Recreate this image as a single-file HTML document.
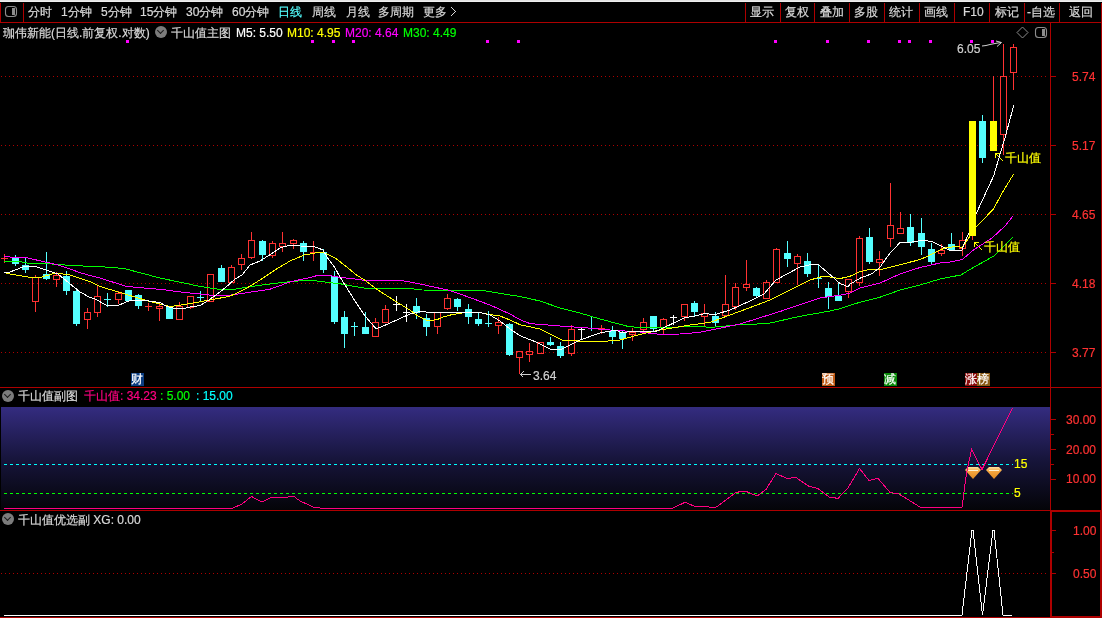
<!DOCTYPE html>
<html><head><meta charset="utf-8"><style>
html,body{margin:0;padding:0;background:#000;width:1102px;height:618px;overflow:hidden;}
body{position:relative;font-family:"Liberation Sans",sans-serif;}
svg{position:absolute;left:0;top:0;}
.t{position:absolute;font-size:12px;line-height:14px;white-space:nowrap;color:#d8d8d8;will-change:transform;-webkit-text-stroke:0.2px currentColor;}
.ax{position:absolute;font-size:12px;line-height:12px;color:#ff3232;white-space:nowrap;will-change:transform;-webkit-text-stroke:0.2px currentColor;}
.circ{position:absolute;width:12px;height:12px;border-radius:6px;background:#7c7c7c;}
.circ:after{content:"";position:absolute;left:3px;top:2px;width:4px;height:4px;border-right:1.5px solid #1a1a1a;border-bottom:1.5px solid #1a1a1a;transform:rotate(45deg);}
</style></head><body>
<svg width="1102" height="618" viewBox="0 0 1102 618" shape-rendering="crispEdges">
<rect x="0" y="0" width="1102" height="618" fill="#000"/>
<rect x="0" y="0" width="1102" height="1" fill="#e3e3e3"/>
<rect x="0" y="1" width="1102" height="1" fill="#efefef"/>
<rect x="0" y="3" width="1" height="19" fill="#ae0000"/>
<rect x="23" y="3" width="1" height="19" fill="#ae0000"/>
<rect x="745" y="3" width="1" height="19" fill="#ae0000"/>
<rect x="780" y="3" width="1" height="19" fill="#ae0000"/>
<rect x="814" y="3" width="1" height="19" fill="#ae0000"/>
<rect x="849" y="3" width="1" height="19" fill="#ae0000"/>
<rect x="884" y="3" width="1" height="19" fill="#ae0000"/>
<rect x="919" y="3" width="1" height="19" fill="#ae0000"/>
<rect x="954" y="3" width="1" height="19" fill="#ae0000"/>
<rect x="989" y="3" width="1" height="19" fill="#ae0000"/>
<rect x="1024" y="3" width="1" height="19" fill="#ae0000"/>
<rect x="1059" y="3" width="1" height="19" fill="#ae0000"/>
<rect x="1101" y="3" width="1" height="19" fill="#ae0000"/>
<rect x="0" y="22" width="1102" height="1" fill="#ae0000"/>
<rect x="1050" y="23" width="1" height="595" fill="#ae0000"/>
<rect x="1101" y="23" width="1" height="595" fill="#ae0000"/>
<rect x="0" y="387" width="1102" height="1" fill="#ae0000"/>
<rect x="0" y="510" width="1102" height="1" fill="#ae0000"/>
<rect x="0" y="617" width="1102" height="1" fill="#ae0000"/>
<rect x="1051" y="511" width="1" height="107" fill="#ae0000"/>
<rect x="1050" y="511" width="52" height="1" fill="#ae0000"/>
<rect x="1100" y="511" width="1" height="107" fill="#ae0000"/>
<rect x="1050" y="616" width="52" height="1" fill="#ae0000"/>
<line x1="1" y1="76.5" x2="1048" y2="76.5" stroke="#ae0000" stroke-width="1" stroke-dasharray="1 3"/>
<rect x="1051" y="76" width="5" height="1" fill="#ae0000"/>
<line x1="1" y1="145.5" x2="1048" y2="145.5" stroke="#ae0000" stroke-width="1" stroke-dasharray="1 3"/>
<rect x="1051" y="145" width="5" height="1" fill="#ae0000"/>
<line x1="1" y1="214.5" x2="1048" y2="214.5" stroke="#ae0000" stroke-width="1" stroke-dasharray="1 3"/>
<rect x="1051" y="214" width="5" height="1" fill="#ae0000"/>
<line x1="1" y1="283.5" x2="1048" y2="283.5" stroke="#ae0000" stroke-width="1" stroke-dasharray="1 3"/>
<rect x="1051" y="283" width="5" height="1" fill="#ae0000"/>
<line x1="1" y1="352.5" x2="1048" y2="352.5" stroke="#ae0000" stroke-width="1" stroke-dasharray="1 3"/>
<rect x="1051" y="352" width="5" height="1" fill="#ae0000"/>
<line x1="1" y1="573.5" x2="1048" y2="573.5" stroke="#ae0000" stroke-width="1" stroke-dasharray="1 3"/>
<rect x="1052" y="530" width="4" height="1" fill="#ae0000"/>
<rect x="1052" y="552" width="2" height="1" fill="#ae0000"/>
<rect x="1052" y="573" width="4" height="1" fill="#ae0000"/>
<defs><linearGradient id="g1" x1="0" y1="0" x2="0" y2="1"><stop offset="0" stop-color="#342c80"/><stop offset="0.5" stop-color="#17153c"/><stop offset="1" stop-color="#040408"/></linearGradient></defs>
<rect x="1" y="407" width="1049" height="103" fill="url(#g1)"/>
<line x1="4" y1="464.5" x2="1013" y2="464.5" stroke="#00ffff" stroke-width="1" stroke-dasharray="3 3"/>
<line x1="4" y1="493.5" x2="1013" y2="493.5" stroke="#00ff00" stroke-width="1" stroke-dasharray="3 3"/>
<rect x="1051" y="419" width="5" height="1" fill="#ae0000"/>
<rect x="1051" y="434" width="3" height="1" fill="#ae0000"/>
<rect x="1051" y="449" width="5" height="1" fill="#ae0000"/>
<rect x="1051" y="464" width="3" height="1" fill="#ae0000"/>
<rect x="1051" y="479" width="5" height="1" fill="#ae0000"/>
<rect x="126" y="40" width="3" height="3" fill="#ff00ff"/>
<rect x="311" y="40" width="3" height="3" fill="#ff00ff"/>
<rect x="332" y="40" width="3" height="3" fill="#ff00ff"/>
<rect x="352" y="40" width="3" height="3" fill="#ff00ff"/>
<rect x="486" y="40" width="3" height="3" fill="#ff00ff"/>
<rect x="517" y="40" width="3" height="3" fill="#ff00ff"/>
<rect x="774" y="40" width="3" height="3" fill="#ff00ff"/>
<rect x="826" y="40" width="3" height="3" fill="#ff00ff"/>
<rect x="867" y="40" width="3" height="3" fill="#ff00ff"/>
<rect x="898" y="40" width="3" height="3" fill="#ff00ff"/>
<rect x="908" y="40" width="3" height="3" fill="#ff00ff"/>
<rect x="929" y="40" width="3" height="3" fill="#ff00ff"/>
<rect x="970" y="40" width="3" height="3" fill="#ff00ff"/>
<rect x="991" y="40" width="3" height="3" fill="#ff00ff"/>
<rect x="5.5" y="6.5" width="11" height="10" rx="3" fill="none" stroke="#8c8c8c" stroke-width="1.1" shape-rendering="auto"/>
<rect x="12" y="8" width="3" height="7" fill="#8c8c8c"/>
<rect x="1035.5" y="27.5" width="11" height="10" rx="3" fill="none" stroke="#8c8c8c" stroke-width="1.1" shape-rendering="auto"/>
<rect x="1042" y="29" width="3" height="7" fill="#8c8c8c"/>
<path d="M1022.5 27 L1028 32.5 L1022.5 38 L1017 32.5 Z" fill="none" stroke="#8c8c8c" stroke-width="1" shape-rendering="auto"/>
<path d="M982 46 L986 45.5 L990 44.5 L995 43.5 L1001 42.5 M996 41 L1001.5 42.5 L997 46.5" fill="none" stroke="#d0d0d0" stroke-width="1" shape-rendering="auto"/>
<path d="M520 374.5 L531 374.5 M523.5 371.5 L520.5 374.5 L523.5 377.5" fill="none" stroke="#d0d0d0" stroke-width="1"/>
<path d="M974.5 242.5 L982 250 M974.5 242.5 L974.5 246.5 M974.5 242.5 L978.5 242.5" fill="none" stroke="#ffff00" stroke-width="1"/>
<path d="M995.5 153.5 L1003 161 M995.5 153.5 L995.5 157.5 M995.5 153.5 L999.5 153.5" fill="none" stroke="#ffff00" stroke-width="1"/>
<defs><linearGradient id="gem" x1="0" y1="0" x2="0" y2="1"><stop offset="0" stop-color="#ffe2a0"/><stop offset="0.35" stop-color="#f5a640"/><stop offset="1" stop-color="#e08a20"/></linearGradient></defs>
<path d="M968 467 L978 467 L981 470 L973 479 L965 470 Z" fill="url(#gem)" shape-rendering="auto"/>
<path d="M968 470 L978 470" stroke="#fff2d0" stroke-width="1" fill="none"/>
<path d="M989 467 L999 467 L1002 470 L994 479 L986 470 Z" fill="url(#gem)" shape-rendering="auto"/>
<path d="M989 470 L999 470" stroke="#fff2d0" stroke-width="1" fill="none"/>
<rect x="131" y="373" width="13" height="13" fill="#0a3c80"/>
<rect x="822" y="373" width="13" height="13" fill="#c05a14"/>
<rect x="884" y="373" width="13" height="13" fill="#0a8a0a"/>
<rect x="965" y="373" width="13" height="13" fill="#8a0a0a"/>
<rect x="977" y="373" width="13" height="13" fill="#8a5a14"/>
<rect x="451" y="7" width="1" height="1" fill="#d8d8d8"/>
<rect x="452" y="8" width="1" height="1" fill="#d8d8d8"/>
<rect x="453" y="9" width="1" height="1" fill="#d8d8d8"/>
<rect x="454" y="10" width="1" height="1" fill="#d8d8d8"/>
<rect x="455" y="11" width="1" height="1" fill="#d8d8d8"/>
<rect x="454" y="12" width="1" height="1" fill="#d8d8d8"/>
<rect x="453" y="13" width="1" height="1" fill="#d8d8d8"/>
<rect x="452" y="14" width="1" height="1" fill="#d8d8d8"/>
<rect x="451" y="15" width="1" height="1" fill="#d8d8d8"/>
<g shape-rendering="crispEdges">
<rect x="4" y="254" width="1" height="9" fill="#ff3232"/>
<rect x="1" y="258" width="7" height="1" fill="#ff3232"/>
<rect x="15" y="255" width="1" height="11" fill="#54ffff"/>
<rect x="12" y="258" width="7" height="6" fill="#54ffff"/>
<rect x="25" y="258" width="1" height="15" fill="#54ffff"/>
<rect x="22" y="265" width="7" height="5" fill="#54ffff"/>
<rect x="35" y="275" width="1" height="2" fill="#ff3232"/>
<rect x="35" y="302" width="1" height="10" fill="#ff3232"/>
<rect x="32.5" y="277.5" width="6" height="24" fill="none" stroke="#ff3232" stroke-width="1"/>
<rect x="46" y="252" width="1" height="28" fill="#54ffff"/>
<rect x="43" y="274" width="7" height="5" fill="#54ffff"/>
<rect x="56" y="272" width="1" height="3" fill="#ff3232"/>
<rect x="56" y="280" width="1" height="7" fill="#ff3232"/>
<rect x="53.5" y="275.5" width="6" height="4" fill="none" stroke="#ff3232" stroke-width="1"/>
<rect x="66" y="271" width="1" height="24" fill="#54ffff"/>
<rect x="63" y="276" width="7" height="15" fill="#54ffff"/>
<rect x="76" y="288" width="1" height="38" fill="#54ffff"/>
<rect x="73" y="291" width="7" height="33" fill="#54ffff"/>
<rect x="87" y="308" width="1" height="4" fill="#ff3232"/>
<rect x="87" y="320" width="1" height="9" fill="#ff3232"/>
<rect x="84.5" y="312.5" width="6" height="7" fill="none" stroke="#ff3232" stroke-width="1"/>
<rect x="97" y="286" width="1" height="10" fill="#ff3232"/>
<rect x="97" y="313" width="1" height="4" fill="#ff3232"/>
<rect x="94.5" y="296.5" width="6" height="16" fill="none" stroke="#ff3232" stroke-width="1"/>
<rect x="107" y="293" width="1" height="14" fill="#54ffff"/>
<rect x="104" y="299" width="7" height="1" fill="#54ffff"/>
<rect x="118" y="291" width="1" height="2" fill="#ff3232"/>
<rect x="118" y="300" width="1" height="4" fill="#ff3232"/>
<rect x="115.5" y="293.5" width="6" height="6" fill="none" stroke="#ff3232" stroke-width="1"/>
<rect x="128" y="290" width="1" height="11" fill="#54ffff"/>
<rect x="125" y="290" width="7" height="11" fill="#54ffff"/>
<rect x="138" y="294" width="1" height="15" fill="#54ffff"/>
<rect x="135" y="295" width="7" height="11" fill="#54ffff"/>
<rect x="148" y="303" width="1" height="8" fill="#ff3232"/>
<rect x="145" y="306" width="7" height="1" fill="#ff3232"/>
<rect x="159" y="304" width="1" height="2" fill="#ff3232"/>
<rect x="159" y="309" width="1" height="12" fill="#ff3232"/>
<rect x="156.5" y="306.5" width="6" height="2" fill="none" stroke="#ff3232" stroke-width="1"/>
<rect x="169" y="307" width="1" height="12" fill="#54ffff"/>
<rect x="166" y="307" width="7" height="12" fill="#54ffff"/>
<rect x="179" y="302" width="1" height="4" fill="#ff3232"/>
<rect x="176.5" y="306.5" width="6" height="13" fill="none" stroke="#ff3232" stroke-width="1"/>
<rect x="190" y="308" width="1" height="1" fill="#ff3232"/>
<rect x="187.5" y="296.5" width="6" height="11" fill="none" stroke="#ff3232" stroke-width="1"/>
<rect x="200" y="291" width="1" height="10" fill="#54ffff"/>
<rect x="197" y="297" width="7" height="1" fill="#54ffff"/>
<rect x="207.5" y="274.5" width="6" height="27" fill="none" stroke="#ff3232" stroke-width="1"/>
<rect x="221" y="265" width="1" height="17" fill="#54ffff"/>
<rect x="218" y="268" width="7" height="14" fill="#54ffff"/>
<rect x="231" y="265" width="1" height="2" fill="#ff3232"/>
<rect x="228.5" y="267.5" width="6" height="15" fill="none" stroke="#ff3232" stroke-width="1"/>
<rect x="241" y="254" width="1" height="4" fill="#ff3232"/>
<rect x="241" y="265" width="1" height="5" fill="#ff3232"/>
<rect x="238.5" y="258.5" width="6" height="6" fill="none" stroke="#ff3232" stroke-width="1"/>
<rect x="251" y="232" width="1" height="8" fill="#ff3232"/>
<rect x="251" y="258" width="1" height="1" fill="#ff3232"/>
<rect x="248.5" y="240.5" width="6" height="17" fill="none" stroke="#ff3232" stroke-width="1"/>
<rect x="262" y="240" width="1" height="21" fill="#54ffff"/>
<rect x="259" y="241" width="7" height="14" fill="#54ffff"/>
<rect x="272" y="241" width="1" height="2" fill="#ff3232"/>
<rect x="272" y="256" width="1" height="2" fill="#ff3232"/>
<rect x="269.5" y="243.5" width="6" height="12" fill="none" stroke="#ff3232" stroke-width="1"/>
<rect x="282" y="232" width="1" height="11" fill="#ff3232"/>
<rect x="282" y="247" width="1" height="5" fill="#ff3232"/>
<rect x="279.5" y="243.5" width="6" height="3" fill="none" stroke="#ff3232" stroke-width="1"/>
<rect x="293" y="239" width="1" height="1" fill="#ff3232"/>
<rect x="293" y="244" width="1" height="5" fill="#ff3232"/>
<rect x="290.5" y="240.5" width="6" height="3" fill="none" stroke="#ff3232" stroke-width="1"/>
<rect x="303" y="241" width="1" height="20" fill="#54ffff"/>
<rect x="300" y="243" width="7" height="9" fill="#54ffff"/>
<rect x="313" y="241" width="1" height="20" fill="#ff3232"/>
<rect x="310" y="252" width="7" height="1" fill="#ff3232"/>
<rect x="323" y="249" width="1" height="24" fill="#54ffff"/>
<rect x="320" y="252" width="7" height="18" fill="#54ffff"/>
<rect x="334" y="271" width="1" height="53" fill="#54ffff"/>
<rect x="331" y="276" width="7" height="46" fill="#54ffff"/>
<rect x="344" y="311" width="1" height="37" fill="#54ffff"/>
<rect x="341" y="317" width="7" height="17" fill="#54ffff"/>
<rect x="354" y="322" width="1" height="14" fill="#54ffff"/>
<rect x="351" y="326" width="7" height="1" fill="#54ffff"/>
<rect x="365" y="312" width="1" height="22" fill="#54ffff"/>
<rect x="362" y="327" width="7" height="7" fill="#54ffff"/>
<rect x="375" y="318" width="1" height="4" fill="#ff3232"/>
<rect x="372.5" y="322.5" width="6" height="14" fill="none" stroke="#ff3232" stroke-width="1"/>
<rect x="385" y="305" width="1" height="4" fill="#ff3232"/>
<rect x="382.5" y="309.5" width="6" height="13" fill="none" stroke="#ff3232" stroke-width="1"/>
<rect x="396" y="296" width="1" height="15" fill="#ffffff"/>
<rect x="393" y="304" width="7" height="1" fill="#ffffff"/>
<rect x="406" y="304" width="1" height="18" fill="#ffffff"/>
<rect x="403" y="312" width="7" height="1" fill="#ffffff"/>
<rect x="416" y="298" width="1" height="21" fill="#54ffff"/>
<rect x="413" y="306" width="7" height="7" fill="#54ffff"/>
<rect x="426" y="314" width="1" height="22" fill="#54ffff"/>
<rect x="423" y="318" width="7" height="9" fill="#54ffff"/>
<rect x="437" y="327" width="1" height="7" fill="#ff3232"/>
<rect x="434.5" y="312.5" width="6" height="14" fill="none" stroke="#ff3232" stroke-width="1"/>
<rect x="447" y="294" width="1" height="4" fill="#ff3232"/>
<rect x="447" y="309" width="1" height="1" fill="#ff3232"/>
<rect x="444.5" y="298.5" width="6" height="10" fill="none" stroke="#ff3232" stroke-width="1"/>
<rect x="457" y="298" width="1" height="13" fill="#54ffff"/>
<rect x="454" y="299" width="7" height="8" fill="#54ffff"/>
<rect x="468" y="304" width="1" height="20" fill="#54ffff"/>
<rect x="465" y="309" width="7" height="8" fill="#54ffff"/>
<rect x="478" y="312" width="1" height="14" fill="#54ffff"/>
<rect x="475" y="319" width="7" height="5" fill="#54ffff"/>
<rect x="488" y="311" width="1" height="16" fill="#54ffff"/>
<rect x="485" y="323" width="7" height="1" fill="#54ffff"/>
<rect x="498" y="317" width="1" height="5" fill="#ff3232"/>
<rect x="498" y="326" width="1" height="8" fill="#ff3232"/>
<rect x="495.5" y="322.5" width="6" height="3" fill="none" stroke="#ff3232" stroke-width="1"/>
<rect x="509" y="323" width="1" height="33" fill="#54ffff"/>
<rect x="506" y="324" width="7" height="31" fill="#54ffff"/>
<rect x="519" y="358" width="1" height="16" fill="#ff3232"/>
<rect x="516.5" y="351.5" width="6" height="6" fill="none" stroke="#ff3232" stroke-width="1"/>
<rect x="529" y="343" width="1" height="8" fill="#ff3232"/>
<rect x="529" y="355" width="1" height="7" fill="#ff3232"/>
<rect x="526.5" y="351.5" width="6" height="3" fill="none" stroke="#ff3232" stroke-width="1"/>
<rect x="537.5" y="342.5" width="6" height="11" fill="none" stroke="#ff3232" stroke-width="1"/>
<rect x="550" y="337" width="1" height="9" fill="#54ffff"/>
<rect x="547" y="342" width="7" height="3" fill="#54ffff"/>
<rect x="560" y="342" width="1" height="16" fill="#54ffff"/>
<rect x="557" y="346" width="7" height="10" fill="#54ffff"/>
<rect x="571" y="325" width="1" height="4" fill="#ff3232"/>
<rect x="571" y="354" width="1" height="2" fill="#ff3232"/>
<rect x="568.5" y="329.5" width="6" height="24" fill="none" stroke="#ff3232" stroke-width="1"/>
<rect x="581" y="327" width="1" height="12" fill="#ffffff"/>
<rect x="578" y="329" width="7" height="1" fill="#ffffff"/>
<rect x="591" y="317" width="1" height="14" fill="#54ffff"/>
<rect x="588" y="328" width="7" height="1" fill="#54ffff"/>
<rect x="601" y="325" width="1" height="3" fill="#ff3232"/>
<rect x="601" y="329" width="1" height="5" fill="#ff3232"/>
<rect x="598.5" y="328.5" width="6" height="1" fill="none" stroke="#ff3232" stroke-width="1"/>
<rect x="612" y="326" width="1" height="18" fill="#54ffff"/>
<rect x="609" y="331" width="7" height="6" fill="#54ffff"/>
<rect x="622" y="331" width="1" height="18" fill="#54ffff"/>
<rect x="619" y="332" width="7" height="7" fill="#54ffff"/>
<rect x="632" y="328" width="1" height="4" fill="#ff3232"/>
<rect x="632" y="335" width="1" height="6" fill="#ff3232"/>
<rect x="629.5" y="332.5" width="6" height="2" fill="none" stroke="#ff3232" stroke-width="1"/>
<rect x="643" y="318" width="1" height="4" fill="#ff3232"/>
<rect x="643" y="330" width="1" height="1" fill="#ff3232"/>
<rect x="640.5" y="322.5" width="6" height="7" fill="none" stroke="#ff3232" stroke-width="1"/>
<rect x="653" y="316" width="1" height="15" fill="#54ffff"/>
<rect x="650" y="316" width="7" height="13" fill="#54ffff"/>
<rect x="663" y="318" width="1" height="1" fill="#ff3232"/>
<rect x="663" y="328" width="1" height="6" fill="#ff3232"/>
<rect x="660.5" y="319.5" width="6" height="8" fill="none" stroke="#ff3232" stroke-width="1"/>
<rect x="673" y="315" width="1" height="10" fill="#ffffff"/>
<rect x="670" y="317" width="7" height="1" fill="#ffffff"/>
<rect x="684" y="317" width="1" height="4" fill="#ff3232"/>
<rect x="681.5" y="304.5" width="6" height="12" fill="none" stroke="#ff3232" stroke-width="1"/>
<rect x="694" y="301" width="1" height="15" fill="#54ffff"/>
<rect x="691" y="303" width="7" height="9" fill="#54ffff"/>
<rect x="704" y="304" width="1" height="9" fill="#ff3232"/>
<rect x="704" y="317" width="1" height="9" fill="#ff3232"/>
<rect x="701.5" y="313.5" width="6" height="3" fill="none" stroke="#ff3232" stroke-width="1"/>
<rect x="715" y="312" width="1" height="14" fill="#54ffff"/>
<rect x="712" y="316" width="7" height="7" fill="#54ffff"/>
<rect x="725" y="275" width="1" height="29" fill="#ff3232"/>
<rect x="725" y="316" width="1" height="1" fill="#ff3232"/>
<rect x="722.5" y="304.5" width="6" height="11" fill="none" stroke="#ff3232" stroke-width="1"/>
<rect x="735" y="283" width="1" height="4" fill="#ff3232"/>
<rect x="735" y="307" width="1" height="3" fill="#ff3232"/>
<rect x="732.5" y="287.5" width="6" height="19" fill="none" stroke="#ff3232" stroke-width="1"/>
<rect x="746" y="260" width="1" height="24" fill="#ff3232"/>
<rect x="746" y="288" width="1" height="3" fill="#ff3232"/>
<rect x="743.5" y="284.5" width="6" height="3" fill="none" stroke="#ff3232" stroke-width="1"/>
<rect x="756" y="287" width="1" height="11" fill="#54ffff"/>
<rect x="753" y="288" width="7" height="8" fill="#54ffff"/>
<rect x="766" y="280" width="1" height="2" fill="#ff3232"/>
<rect x="763.5" y="282.5" width="6" height="16" fill="none" stroke="#ff3232" stroke-width="1"/>
<rect x="776" y="248" width="1" height="1" fill="#ff3232"/>
<rect x="773.5" y="249.5" width="6" height="33" fill="none" stroke="#ff3232" stroke-width="1"/>
<rect x="787" y="241" width="1" height="26" fill="#54ffff"/>
<rect x="784" y="253" width="7" height="6" fill="#54ffff"/>
<rect x="797" y="254" width="1" height="2" fill="#ff3232"/>
<rect x="797" y="264" width="1" height="21" fill="#ff3232"/>
<rect x="794.5" y="256.5" width="6" height="7" fill="none" stroke="#ff3232" stroke-width="1"/>
<rect x="807" y="253" width="1" height="24" fill="#54ffff"/>
<rect x="804" y="261" width="7" height="13" fill="#54ffff"/>
<rect x="818" y="265" width="1" height="23" fill="#54ffff"/>
<rect x="815" y="278" width="7" height="1" fill="#54ffff"/>
<rect x="828" y="282" width="1" height="27" fill="#54ffff"/>
<rect x="825" y="288" width="7" height="9" fill="#54ffff"/>
<rect x="838" y="283" width="1" height="18" fill="#54ffff"/>
<rect x="835" y="296" width="7" height="5" fill="#54ffff"/>
<rect x="848" y="292" width="1" height="6" fill="#ff3232"/>
<rect x="845.5" y="279.5" width="6" height="12" fill="none" stroke="#ff3232" stroke-width="1"/>
<rect x="859" y="236" width="1" height="2" fill="#ff3232"/>
<rect x="859" y="283" width="1" height="3" fill="#ff3232"/>
<rect x="856.5" y="238.5" width="6" height="44" fill="none" stroke="#ff3232" stroke-width="1"/>
<rect x="869" y="228" width="1" height="36" fill="#54ffff"/>
<rect x="866" y="237" width="7" height="25" fill="#54ffff"/>
<rect x="879" y="251" width="1" height="8" fill="#ff3232"/>
<rect x="879" y="263" width="1" height="13" fill="#ff3232"/>
<rect x="876.5" y="259.5" width="6" height="3" fill="none" stroke="#ff3232" stroke-width="1"/>
<rect x="890" y="183" width="1" height="42" fill="#ff3232"/>
<rect x="890" y="239" width="1" height="8" fill="#ff3232"/>
<rect x="887.5" y="225.5" width="6" height="13" fill="none" stroke="#ff3232" stroke-width="1"/>
<rect x="900" y="212" width="1" height="16" fill="#ff3232"/>
<rect x="897.5" y="228.5" width="6" height="5" fill="none" stroke="#ff3232" stroke-width="1"/>
<rect x="910" y="214" width="1" height="32" fill="#54ffff"/>
<rect x="907" y="227" width="7" height="16" fill="#54ffff"/>
<rect x="921" y="218" width="1" height="37" fill="#54ffff"/>
<rect x="918" y="233" width="7" height="14" fill="#54ffff"/>
<rect x="931" y="243" width="1" height="21" fill="#54ffff"/>
<rect x="928" y="249" width="7" height="13" fill="#54ffff"/>
<rect x="941" y="244" width="1" height="6" fill="#ff3232"/>
<rect x="941" y="254" width="1" height="2" fill="#ff3232"/>
<rect x="938.5" y="250.5" width="6" height="3" fill="none" stroke="#ff3232" stroke-width="1"/>
<rect x="951" y="233" width="1" height="17" fill="#54ffff"/>
<rect x="948" y="244" width="7" height="6" fill="#54ffff"/>
<rect x="962" y="232" width="1" height="8" fill="#ff3232"/>
<rect x="962" y="249" width="1" height="7" fill="#ff3232"/>
<rect x="959.5" y="240.5" width="6" height="8" fill="none" stroke="#ff3232" stroke-width="1"/>
<rect x="982" y="115" width="1" height="48" fill="#54ffff"/>
<rect x="979" y="121" width="7" height="37" fill="#54ffff"/>
<rect x="1003" y="44" width="1" height="32" fill="#ff3232"/>
<rect x="1003" y="135" width="1" height="20" fill="#ff3232"/>
<rect x="1000.5" y="76.5" width="6" height="58" fill="none" stroke="#ff3232" stroke-width="1"/>
<rect x="1013" y="44" width="1" height="3" fill="#ff3232"/>
<rect x="1013" y="73" width="1" height="17" fill="#ff3232"/>
<rect x="1010.5" y="47.5" width="6" height="25" fill="none" stroke="#ff3232" stroke-width="1"/>
<polyline points="4,261.3 20,261.6 30,263.6 52,264 72,265.6 100,266.6 124,268.5 160,278 200,286.4 218,289.2 235,289.2 260,285.2 285,282.2 305,280.4 310,280.4 319,281.2 330,282.7 340,283.7 350,285.7 365,288.2 380,288.7 410,288.5 422,290 483,290.5 495,292.5 510,295 520,296.5 540,301 560,308 580,313 600,319 628,326.4 640,327.6 680,327 700,326.3 710,327.5 736,325 768,323.5 800,316.3 830,311 840,308.7 860,302.2 880,297.2 900,290 920,285 940,279 950,277 961,275 967.6,270.8 993.8,256 1013.4,236.9" fill="none" stroke="#00ff00" stroke-width="1"/>
<polyline points="4,256 10,257 27,257.5 28,258 45,262 53,263.6 60,265.6 80,272.6 90,275.6 100,278 106,280 127,286.5 144,288 162,289.5 176,291.5 200,294 215,295.7 230,295.2 250,292.2 270,289.2 290,282 305,278.5 310,277.6 318,275.3 328,275.3 340,277.3 350,278.4 365,280.4 400,280.4 410,282 420,284 450,290.5 470,297.6 490,305 510,314 520,319.7 530,323.6 560,326 588,328 610,330 640,332 660,334.4 680,334 700,332.3 740,324 780,311.5 820,298 840,295.2 850,293.2 860,288 880,283 900,274 920,267.5 940,263 950,262 962,259.7 974,249.6 992,238 1005,226 1013,216" fill="none" stroke="#ff00ff" stroke-width="1"/>
<polyline points="4,272.6 10,274 32,277.6 40,277.6 52,274 60,273.6 70,275 90,281.6 100,286.5 120,292.5 150,301.6 170,306.6 190,303.6 210,300 230,296.2 245,289.2 260,280 275,270 290,261 305.4,254.6 310,254 318,252.5 325,253 336,258.6 348,268 356,274.6 364,279.7 378,290 395,301 400,304 410,310 418,316 427,320.7 437,319.7 443,317 452,314.6 462,313 480,312.6 490,314.6 500,316 510,320 520,324.7 540,329 562,340 588,341.6 608,341 620,340 640,334.4 660,330 690,325 710,322.4 730,315 750,307.6 770,300 790,290 810,280 824,276 840,278.6 850,276.2 860,271.7 870,269.2 880,269.7 900,264.7 920,259.6 928,256 940,250 946,247.6 956.4,246.6 960,247 962,247.7 964,245 976,227 983,220 993.6,208.7 1002.7,192 1013.8,173.8" fill="none" stroke="#ffff00" stroke-width="1"/>
<polyline points="4,273 10,272 24,266.6 36,266.6 48,270.6 58,274 80,292 90,297.5 95,299 106,305 119,305 130,300.5 142,300 160,302.5 167,306.5 175,308.6 184,308.6 190,307 200,305.6 207,301.2 217,294.2 226,287.2 235,279 242,275 250,265 260,261 270,254.6 280,248 290,245 300.4,246 310,246.5 314,246.5 323,250 327,257 335,268 340,277 345,285 355,301 365,316 376,328.6 382,326.6 410,314 420,311.6 435,312.6 460,312.6 480,312.6 490,315 500,321 510,329 520,335.7 536,342 550,349 562,349 580,340 600,333 616,330 620,332.2 638,331.7 655,331.7 667,326.2 684,318 695,316 705,313.6 715,314.6 730,310 750,301 764,294 776,280 800,267 814,264 818,264.4 834,278 840,283.6 848,286.6 850,284.2 860,278.2 872,273.7 880,267.2 890,253 900,242.6 906,243 920,240.6 926,240.6 932,241.6 950,250.6 960,250.6 962,250 964,244 969,233 976,214 993.6,176 1005,137.6 1013.8,105.3" fill="none" stroke="#ffffff" stroke-width="1"/>
<rect x="972" y="121" width="1" height="119" fill="#ff3232"/>
<rect x="969" y="121" width="7" height="115" fill="#ffff00"/>
<rect x="993" y="76" width="1" height="75" fill="#ff3232"/>
<rect x="990" y="121" width="7" height="30" fill="#ffff00"/>
<polyline points="4,508 233,508 242,504 251.5,496.5 262,502 272,497 288,497 294,496.5 300,501 314,507.3 320,508 673,508 685,502.3 694,506 706,506.5 715,508 736,492.4 745,491 757,496 766,489.4 776,473.6 787,478.4 796,477.5 809,486.4 818,488.5 829,497 838,498.4 848,488 859.5,468.5 869,480.5 878,478.4 890,492.4 899,494 921.5,508 962,507.4 966.5,473 971.6,449.5 982,469.5 1012.6,407.9" fill="none" stroke="#ff0080" stroke-width="1"/>
<polyline points="4,615 962,615 972,530 973,530 982.5,615 993,530 994,530 1003,615 1012,615" fill="none" stroke="#ffffff" stroke-width="1"/>
</g>
</svg>
<div class="t" style="left:28px;top:5px;">分时</div>
<div class="t" style="left:61px;top:5px;">1分钟</div>
<div class="t" style="left:101px;top:5px;">5分钟</div>
<div class="t" style="left:140px;top:5px;">15分钟</div>
<div class="t" style="left:186px;top:5px;">30分钟</div>
<div class="t" style="left:232px;top:5px;">60分钟</div>
<div class="t" style="left:278px;top:5px;color:#54ffff;">日线</div>
<div class="t" style="left:312px;top:5px;">周线</div>
<div class="t" style="left:346px;top:5px;">月线</div>
<div class="t" style="left:378px;top:5px;">多周期</div>
<div class="t" style="left:423px;top:5px;">更多</div>
<div class="t" style="left:750px;top:5px;">显示</div>
<div class="t" style="left:785px;top:5px;">复权</div>
<div class="t" style="left:820px;top:5px;">叠加</div>
<div class="t" style="left:854px;top:5px;">多股</div>
<div class="t" style="left:889px;top:5px;">统计</div>
<div class="t" style="left:924px;top:5px;">画线</div>
<div class="t" style="left:963px;top:5px;">F10</div>
<div class="t" style="left:995px;top:5px;">标记</div>
<div class="t" style="left:1027px;top:5px;">-自选</div>
<div class="t" style="left:1069px;top:5px;">返回</div>
<div class="t" style="left:3px;top:26px;">珈伟新能(日线.前复权.对数)</div>
<div class="circ" style="left:155px;top:26px;"></div>
<div class="t" style="left:171px;top:26px;">千山值主图</div>
<div class="t" style="left:236px;top:26px;color:#fff;">M5: 5.50</div>
<div class="t" style="left:287px;top:26px;color:#ffff00;">M10: 4.95</div>
<div class="t" style="left:345px;top:26px;color:#ff00ff;">M20: 4.64</div>
<div class="t" style="left:403px;top:26px;color:#00ff00;">M30: 4.49</div>
<div class="ax" style="left:1072px;top:71px;">5.74</div>
<div class="ax" style="left:1072px;top:140px;">5.17</div>
<div class="ax" style="left:1072px;top:209px;">4.65</div>
<div class="ax" style="left:1072px;top:278px;">4.18</div>
<div class="ax" style="left:1072px;top:347px;">3.77</div>
<div class="ax" style="left:1066px;top:414px;">30.00</div>
<div class="ax" style="left:1066px;top:444px;">20.00</div>
<div class="ax" style="left:1066px;top:473px;">10.00</div>
<div class="ax" style="left:1073px;top:525px;">1.00</div>
<div class="ax" style="left:1073px;top:568px;">0.50</div>
<div class="t" style="left:957px;top:42px;color:#d0d0d0;">6.05</div>
<div class="t" style="left:533px;top:369px;color:#d0d0d0;">3.64</div>
<div class="t" style="left:1005px;top:151px;color:#ffff00;">千山值</div>
<div class="t" style="left:984px;top:240px;color:#ffff00;">千山值</div>
<div class="t" style="left:131px;top:372px;color:#fff;">财</div>
<div class="t" style="left:822px;top:372px;color:#fff;">预</div>
<div class="t" style="left:884px;top:372px;color:#fff;">减</div>
<div class="t" style="left:965px;top:372px;color:#fff;">涨</div><div class="t" style="left:977px;top:372px;color:#fff;">榜</div>
<div class="circ" style="left:2px;top:390px;"></div>
<div class="t" style="left:18px;top:389px;">千山值副图</div>
<div class="t" style="left:84px;top:389px;color:#ff0080;">千山值: 34.23</div>
<div class="t" style="left:160px;top:389px;color:#00ff00;">: 5.00</div>
<div class="t" style="left:196px;top:389px;color:#00ffff;">: 15.00</div>
<div class="t" style="left:1014px;top:457px;color:#ffff00;">15</div>
<div class="t" style="left:1014px;top:486px;color:#ffff00;">5</div>
<div class="circ" style="left:2px;top:513px;"></div>
<div class="t" style="left:18px;top:513px;">千山值优选副 XG: 0.00</div>
</body></html>
